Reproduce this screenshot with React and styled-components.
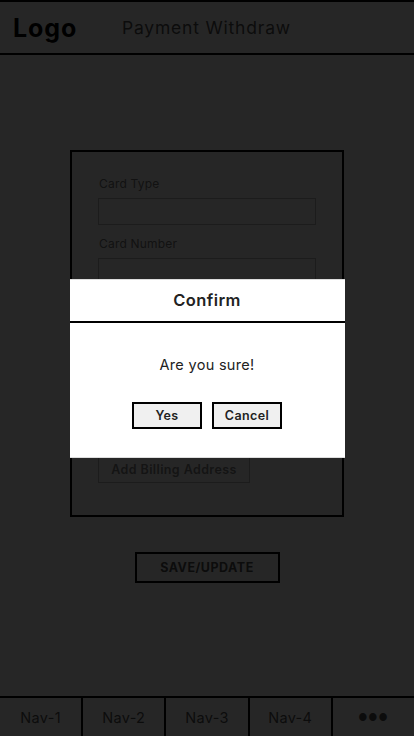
import React from "react";
import styled, { createGlobalStyle } from "styled-components";

const Global = createGlobalStyle`
  html, body { margin: 0; padding: 0; background: #fff; }
  body { font-family: Inter, "Open Sans", "Noto Sans", sans-serif; }
  * { box-sizing: border-box; }
`;

const Page = styled.div`
  width: 414px;
  height: 736px;
  display: flex;
  flex-direction: column;
  background: #fff;
  border-top: 2px solid #000;
`;

const Header = styled.header`
  height: 53px;
  display: flex;
  align-items: center;
  border-bottom: 2px solid #000;
  padding: 0 0 0 13px;
`;

const Logo = styled.div`
  font-size: 25px;
  font-weight: 700;
  color: #000;
  width: 109px;
  letter-spacing: 0.9px;
`;

const Title = styled.div`
  font-size: 17.5px;
  font-weight: 400;
  color: #555;
  letter-spacing: 0.8px;
`;

const Main = styled.main`
  flex: 1;
  display: flex;
  flex-direction: column;
  align-items: center;
  padding-top: 95px;
`;

const Card = styled.section`
  width: 274px;
  border: 2px solid #000;
  padding: 24px 26px 32px;
  display: flex;
  flex-direction: column;
`;

const Field = styled.div`
  display: flex;
  flex-direction: column;
  margin-bottom: 11px;
`;

const Label = styled.label`
  font-size: 12px;
  line-height: 15px;
  color: #777;
  margin-bottom: 7px;
  padding-left: 1px;
  letter-spacing: 0.2px;
`;

const Input = styled.div`
  height: 27px;
  border: 1px solid #bbb;
`;

const GhostButton = styled.button`
  align-self: flex-start;
  margin-top: 159px;
  height: 28px;
  width: 152px;
  border: 1px solid #bbb;
  background: #fff;
  font-family: inherit;
  font-size: 12.5px;
  font-weight: 600;
  color: #888;
  letter-spacing: 0.4px;
  padding: 0;
`;

const SaveButton = styled.button`
  margin-top: 35px;
  width: 145px;
  height: 31px;
  border: 2px solid #000;
  background: #fff;
  font-family: inherit;
  font-size: 12.5px;
  font-weight: 700;
  color: #555;
  letter-spacing: 0.5px;
  padding: 0;
`;

const Nav = styled.nav`
  height: 40px;
  border-top: 2px solid #000;
  display: flex;
`;

const NavItem = styled.div`
  flex: 1;
  display: flex;
  align-items: center;
  justify-content: center;
  font-size: 14.5px;
  color: #555;
  letter-spacing: 0.3px;
  & + & { border-left: 2px solid #000; }
`;

const Dots = styled.span`
  font-size: 10px;
  letter-spacing: 1px;
  color: #555;
`;

const Overlay = styled.div`
  position: fixed;
  inset: 0;
  background: rgba(0, 0, 0, 0.85);
  display: flex;
  align-items: center;
  justify-content: center;
`;

const Modal = styled.div`
  width: 275px;
  height: 179px;
  background: #fff;
  border-top: 1px solid #ddd;
  border-bottom: 1px solid #ddd;
  display: flex;
  flex-direction: column;
`;

const ModalHead = styled.div`
  height: 43px;
  border-bottom: 2px solid #000;
  display: flex;
  align-items: center;
  justify-content: center;
  font-size: 16.5px;
  font-weight: 600;
  color: #222;
  letter-spacing: 0.4px;
`;

const ModalBody = styled.div`
  flex: 1;
  display: flex;
  flex-direction: column;
  align-items: center;
  padding-top: 33px;
`;

const Message = styled.div`
  font-size: 14.5px;
  color: #222;
  letter-spacing: 0.3px;
  line-height: 18px;
`;

const Actions = styled.div`
  display: flex;
  gap: 10px;
  margin-top: 28px;
`;

const ModalButton = styled.button`
  width: 70px;
  height: 27px;
  border: 2px solid #000;
  background: #f0f0f0;
  font-family: inherit;
  font-size: 12.5px;
  font-weight: 600;
  color: #222;
  letter-spacing: 0.4px;
  padding: 0;
`;

export default function App() {
  const fields = ["Card Type", "Card Number"];
  return (
    <>
      <Global />
      <Page>
        <Header>
          <Logo>Logo</Logo>
          <Title>Payment Withdraw</Title>
        </Header>
        <Main>
          <Card>
            {fields.map((f) => (
              <Field key={f}>
                <Label>{f}</Label>
                <Input />
              </Field>
            ))}
            <GhostButton>Add Billing Address</GhostButton>
          </Card>
          <SaveButton>SAVE/UPDATE</SaveButton>
        </Main>
        <Nav>
          <NavItem>Nav-1</NavItem>
          <NavItem>Nav-2</NavItem>
          <NavItem>Nav-3</NavItem>
          <NavItem>Nav-4</NavItem>
          <NavItem>
            <Dots>●●●</Dots>
          </NavItem>
        </Nav>
      </Page>
      <Overlay>
        <Modal>
          <ModalHead>Confirm</ModalHead>
          <ModalBody>
            <Message>Are you sure!</Message>
            <Actions>
              <ModalButton>Yes</ModalButton>
              <ModalButton>Cancel</ModalButton>
            </Actions>
          </ModalBody>
        </Modal>
      </Overlay>
    </>
  );
}
